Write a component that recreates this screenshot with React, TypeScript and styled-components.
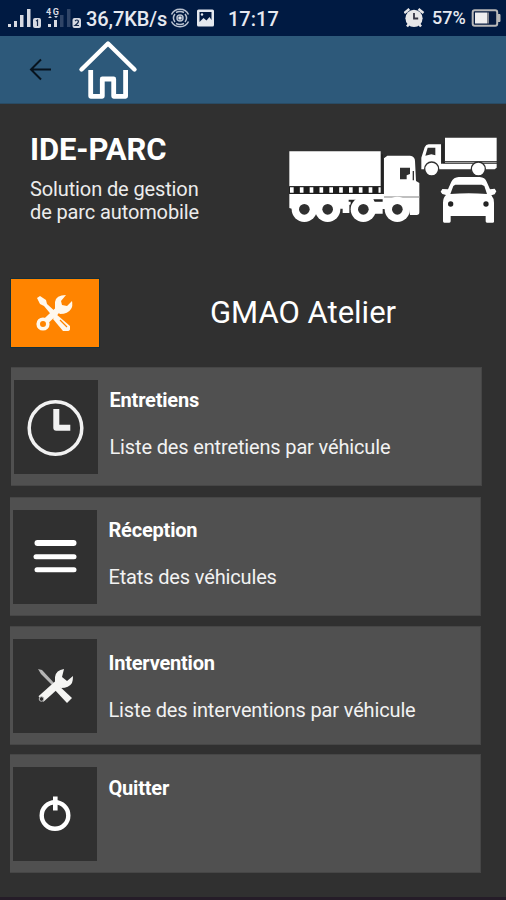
import React from "react";
import styled, { createGlobalStyle } from "styled-components";

const GlobalStyle = createGlobalStyle`
  * { box-sizing: border-box; }
  body { margin: 0; background: #303030; }
`;

const Screen = styled.div`
  width: 506px;
  height: 900px;
  overflow: hidden;
  display: flex;
  flex-direction: column;
  background: #303030;
  border-bottom: 3px solid #251c28;
  color: #fff;
  font-family: Roboto, sans-serif;
`;

const StatusBar = styled.header`
  height: 36px;
  flex: none;
  display: flex;
  align-items: flex-start;
  background: #001a42;
  color: #e6e9f0;
`;

const StatusText = styled.span<{ $size: number; $width: number; $top: number; $spacing?: number }>`
  width: ${(p) => p.$width}px;
  margin-top: ${(p) => p.$top}px;
  font-size: ${(p) => p.$size}px;
  line-height: 24px;
  font-weight: 500;
  letter-spacing: ${(p) => p.$spacing ?? 0}px;
  white-space: nowrap;
`;

const Spacer = styled.div`
  flex: 1;
`;

const AppBar = styled.nav`
  height: 68px;
  flex: none;
  display: flex;
  background: #2d597a;
  border-bottom: 1px solid #294b64;
`;

const BackButton = styled.button`
  width: 76px;
  padding: 0 0 0 28px;
  border: 0;
  background: none;
  display: flex;
  align-items: center;
`;

const HomeButton = styled(BackButton)`
  padding: 0 0 0 2px;
`;

const Intro = styled.section`
  height: 174px;
  flex: none;
  display: flex;
  justify-content: space-between;
  padding: 29px 8px 0 30px;
`;

const Brand = styled.h1`
  margin: 0;
  font-size: 31px;
  line-height: 34px;
  font-weight: 700;
  letter-spacing: -0.1px;
`;

const Tagline = styled.p`
  margin: 11px 0 0;
  font-size: 20px;
  line-height: 23.4px;
  letter-spacing: -0.12px;
  color: #ececec;
`;

const SectionHead = styled.section`
  height: 69px;
  flex: none;
  display: flex;
  align-items: center;
  padding-left: 10px;
`;

const ToolTile = styled.div`
  width: 90px;
  height: 70px;
  flex: none;
  display: flex;
  align-items: center;
  justify-content: center;
  padding-right: 3px;
  background: #ff8400;
  border: 1px solid #14303a;
`;

const SectionTitle = styled.h2`
  margin: 0 0 0 110px;
  font-size: 31px;
  line-height: 36px;
  font-weight: 400;
`;

const Menu = styled.main`
  display: flex;
  flex-direction: column;
  padding-top: 20px;
`;

const Card = styled.article<{ $indent?: number; $gap: number }>`
  width: 471px;
  height: 119px;
  flex: none;
  display: flex;
  align-items: flex-start;
  margin: 0 0 ${(p) => p.$gap}px ${(p) => 10 + (p.$indent ?? 0)}px;
  padding: 12px 0 0 3px;
  background: #505050;
  border: 1px solid #464646;
  border-left: 0;
`;

const IconTile = styled.div`
  width: 84px;
  height: 94px;
  flex: none;
  display: flex;
  align-items: center;
  justify-content: center;
  background: #303030;
`;

const CardText = styled.div<{ $shift: number }>`
  margin: ${(p) => p.$shift}px 0 0 11.5px;
`;

const CardTitle = styled.h3`
  margin: 0;
  font-size: 20px;
  line-height: 24px;
  font-weight: 700;
  letter-spacing: -0.2px;
`;

const CardDescription = styled.p`
  margin: 22.5px 0 0;
  font-size: 20px;
  line-height: 24px;
  letter-spacing: -0.15px;
  color: #f2f2f2;
  white-space: nowrap;
`;

const SignalIcons = () => (
  <svg width="86" height="36" viewBox="0 0 86 36" fill="#d7dae2">
    <path d="M8 24h3v3H8zM14 21h3v6h-3zM20 15h3.5v12H20zM27 9h3.5v18H27z" />
    <rect x="33" y="18" width="8" height="10" rx="2" />
    <path d="M36 21l1.5-1v6" fill="none" stroke="#152a4c" strokeWidth="1.2" />
    <text x="46" y="14.5" fontSize="9" fontWeight="700" textLength="13">4G</text>
    <path d="M48 18l2-2 2 2zM54 16h4l-2 2zM48 24h3v3h-3zM54 20h3v7h-3z" />
    <path d="M60 15h3.5v12H60zM67 9h3.5v18H67z" fill="#304567" />
    <rect x="72.5" y="18" width="8.5" height="10" rx="2" />
    <path d="M75 21q2-2 3.5 0 0 2-3.5 4.5h4" fill="none" stroke="#152a4c" strokeWidth="1.2" />
  </svg>
);

const HotspotIcon = () => (
  <svg width="60" height="36" viewBox="168 0 60 36">
    <g fill="none" stroke="#b9c2d0" strokeWidth="1.5">
      <circle cx="180" cy="18" r="3" />
      <path d="M175 22a6.5 6.5 0 0 1 0-8M185 22a6.5 6.5 0 0 0 0-8M171.5 14.5a9.2 8.5 0 0 1 17 0M171.5 21.5a9.2 8.5 0 0 0 17 0M176 12.5q4-2 8 0M176 23.5q4 2 8 0" />
    </g>
    <circle cx="180" cy="18" r="1.8" fill="#e4e8ef" />
    <rect x="197" y="9.5" width="17" height="17" rx="1.5" fill="#e4e8ef" />
    <path d="M199.5 12h12v8l-2-3-3 3.5-3-2.5-4 4z" fill="#031b42" />
    <circle cx="202" cy="14.5" r="1.2" fill="#e4e8ef" />
  </svg>
);

const AlarmIcon = () => (
  <svg width="28" height="36" viewBox="404 0 28 36">
    <circle cx="414" cy="18.3" r="8.6" fill="#e7e7e8" />
    <path d="M404.3 13l5-4M418.5 9l5 4M409 24l-2 2.5M419 24l2 2.5" stroke="#e7e7e8" strokeWidth="2.5" />
    <path d="M414 13v5.5h4.2" fill="none" stroke="#343442" strokeWidth="1.8" />
  </svg>
);

const BatteryIcon = () => (
  <svg width="36" height="36" viewBox="470 0 36 36">
    <rect x="472.7" y="10.3" width="24.5" height="15.5" rx="2" fill="#061b40" stroke="#b8b8b8" strokeWidth="2" />
    <path d="M475 12.5h12v11h-12z" fill="#eeeeef" />
    <path d="M487 12.5h2v11h-2z" fill="#83868e" />
    <path d="M498 14.5h2v7h-2z" fill="#b8b8b8" stroke="#b8b8b8" />
  </svg>
);

const ArrowIcon = () => (
  <svg width="25" height="26" viewBox="0 0 25 26" fill="none" stroke="#07131e" strokeWidth="2">
    <path d="M23 12.5H3M13 2.5L3 12.5l10 10" />
  </svg>
);

const HouseIcon = () => (
  <svg width="60" height="62" viewBox="78 39 60 62" fill="none" stroke="#fff" strokeLinejoin="round">
    <path d="M81.5 69.5L108 43.5l26.5 26" strokeWidth="4.4" strokeLinecap="round" />
    <path d="M90.7 70v26.3h11.6V79h11.4v17.3h11.9V70" strokeWidth="4.8" />
  </svg>
);

const Fleet = () => (
  <svg width="212" height="92" viewBox="18 24 636 276" fill="#fff">
    {/* articulated lorry */}
    <path d="M28 79h274v105H28z" />
    <path d="M28 184h274v23H28z" fill="#1c1c1c" />
    <path d="M30 195h272" stroke="#fff" strokeWidth="17" strokeDasharray="11 18.5" />
    <path d="M28 207h284V100l10-8h68q15 2 15 16l3 60 10 6v88q0 8-8 8h-20l-2-18h-80v14h-30l-40-40-30 14v24h-20v-13h-70l-60 8-30-10z" />
    <path d="M306 88v118" stroke="#1c1c1c" strokeWidth="4" />
    <path d="M312 216h106" stroke="#aaa" strokeWidth="5" />
    <path d="M280 223h28v7h-24zM206 224h26l-10 14v22h-10v-30h-6z" fill="#222" />
    <path d="M360 128h30v19l-10 4v12h-20z" fill="#303030" />
    <path d="M400 138v28" stroke="#303030" strokeWidth="4" />
    {[73, 143, 250, 352].map((x) => (
      <g key={x}>
        <circle cx={x} cy="253" r="38" />
        <circle cx={x} cy="253" r="16" fill="#303030" />
      </g>
    ))}
    {/* box truck */}
    <path d="M495 38h155v70H495z" />
    <path d="M424 133V98l10-31q4-9 12-9h37v58h167v12l-6 5z" />
    <path d="M489 56v57h161" fill="none" stroke="#1c1c1c" strokeWidth="3" />
    <path d="M495 112h155" stroke="#999" strokeWidth="4" />
    <path d="M443 68h23v23l-12-3-18 4z" fill="#303030" />
    <g stroke="#303030" strokeWidth="4">
      <circle cx="455" cy="132" r="21" />
      <circle cx="595" cy="132" r="21" />
    </g>
    {/* car */}
    <path d="M504 193l10-23q7-13 22-14h63q16 1 21 14l10 23 14-2 5 8-5 9-10 3q8 9 8 22v57q0 3-4 3h-17q-4 0-4-4v-16H512v16q0 4-4 4h-15q-4 0-4-4v-56q0-15 9-23l-11-3-5-7 5-8z" />
    <path d="M526 179h79l8 4 8 24q-55-5-110 0l9-24z" fill="#303030" />
    <circle cx="512" cy="237" r="8" fill="#222" />
    <circle cx="618" cy="237" r="8" fill="#222" />
  </svg>
);

const RepairIcon = () => (
  <svg width="38" height="38" viewBox="0 0 38 38">
    <path d="M2 4l3-2 6 4 1 4 11 10-4 4L9 12 5 10z" fill="#fff8ed" />
    <path d="M21 20l14 12v3q0 2-3 2h-4L18 25z" fill="#fff8ed" />
    <path d="M10 28L26 13" stroke="#fff8ed" strokeWidth="6" />
    <path d="M31 1q-10 0-11 7v8l5 4q8 0 11-5 2-3 1-8l-5 5-5-1-1-4z" fill="#fff8ed" />
    <circle cx="8" cy="30" r="4.8" fill="#ff8400" stroke="#fff8ed" strokeWidth="3.6" />
    <path d="M25 26l7 7" stroke="#ff8400" strokeWidth="1.3" />
  </svg>
);

const ToolsIcon = () => (
  <svg width="36" height="36" viewBox="0 0 36 36">
    <path d="M1 1l4 1 13 14-2 2L4 6z" fill="#b5b5b5" />
    <path d="M20 16l15 14-5 5-14-15z" fill="#f5f5f3" />
    <path d="M4 31L23 14" stroke="#f5f5f3" strokeWidth="7.5" />
    <path d="M27 1q-8 1-9 8v8l6 3q8 0 11-5 1-3 1-7l-6 5-5-4z" fill="#f5f5f3" />
    <circle cx="4.5" cy="31" r="2.3" fill="#303030" stroke="#bbb" strokeWidth="1" />
  </svg>
);

const ClockIcon = () => (
  <svg width="60" height="60" viewBox="0 0 60 60" fill="none" stroke="#f1f1f1">
    <circle cx="29.5" cy="31" r="26.3" strokeWidth="3.5" />
    <path d="M30.3 12v18.8h14" strokeWidth="6" strokeLinejoin="round" />
  </svg>
);

const ListIcon = () => (
  <svg width="46" height="36" viewBox="0 0 46 36" fill="#fff">
    <rect x="2.5" y="1" width="42" height="6" rx="3" />
    <rect x="1.5" y="15.2" width="43" height="5" rx="2.5" />
    <rect x="2.5" y="28.2" width="42" height="5" rx="2.5" />
  </svg>
);

const PowerIcon = () => (
  <svg width="34" height="38" viewBox="0 0 34 38" fill="none" stroke="#fff">
    <circle cx="17" cy="20.5" r="13.3" strokeWidth="4.4" />
    <path d="M17.3 1.5V15.5" strokeWidth="4.6" />
  </svg>
);

const entries = [
  { title: "Entretiens", text: "Liste des entretiens par véhicule", icon: <ClockIcon />, shift: 8, gap: 11, indent: 1 },
  { title: "Réception", text: "Etats des véhicules", icon: <ListIcon />, shift: 8, gap: 10 },
  { title: "Intervention", text: "Liste des interventions par véhicule", icon: <ToolsIcon />, shift: 12, gap: 9 },
  { title: "Quitter", icon: <PowerIcon />, shift: 9, gap: 0 },
];

export default function App() {
  return (
    <>
      <GlobalStyle />
      <Screen>
        <StatusBar>
          <SignalIcons />
          <StatusText $size={20} $width={82} $top={7} $spacing={-0.1}>36,7KB/s</StatusText>
          <HotspotIcon />
          <StatusText $size={20} $width={60} $top={7}>17:17</StatusText>
          <Spacer />
          <AlarmIcon />
          <StatusText $size={18} $width={38} $top={6}>57%</StatusText>
          <BatteryIcon />
        </StatusBar>
        <AppBar>
          <BackButton aria-label="Retour"><ArrowIcon /></BackButton>
          <HomeButton aria-label="Accueil"><HouseIcon /></HomeButton>
        </AppBar>
        <Intro>
          <div>
            <Brand>IDE-PARC</Brand>
            <Tagline>Solution de gestion<br />de parc automobile</Tagline>
          </div>
          <Fleet />
        </Intro>
        <SectionHead>
          <ToolTile><RepairIcon /></ToolTile>
          <SectionTitle>GMAO Atelier</SectionTitle>
        </SectionHead>
        <Menu>
          {entries.map((e) => (
            <Card key={e.title} $gap={e.gap} $indent={e.indent}>
              <IconTile>{e.icon}</IconTile>
              <CardText $shift={e.shift}>
                <CardTitle>{e.title}</CardTitle>
                {e.text && <CardDescription>{e.text}</CardDescription>}
              </CardText>
            </Card>
          ))}
        </Menu>
      </Screen>
    </>
  );
}
